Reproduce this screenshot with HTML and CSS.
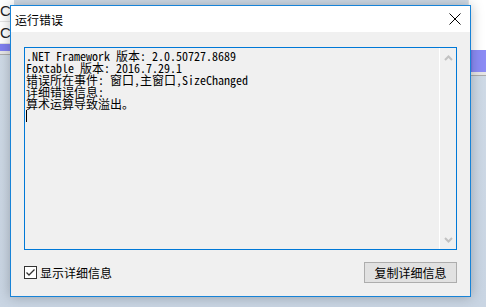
FILE: index.html
```html
<!DOCTYPE html>
<html lang="zh-CN">
<head>
    <meta charset="UTF-8">
    <title>运行错误</title>
    <link rel="stylesheet" href="styles.css">
</head>
<body>

    <!-- Application behind the dialog -->
    <div class="desktop">
        <div class="app-left">
            <div class="app-row">C:</div>
            <div class="app-row">C:</div>
            <div class="app-band"></div>
        </div>
        <div class="app-right">
            <div class="app-cell"></div>
            <div class="app-band"></div>
        </div>
    </div>

    <!-- Error dialog -->
    <div class="dialog">
        <div class="titlebar">
            <span class="title">运行错误</span>
            <svg class="close" width="12" height="12" viewBox="0 0 12 12">
                <path d="M0.5 0.5 L11.5 11.5 M11.5 0.5 L0.5 11.5" stroke="#000" stroke-width="1" fill="none"/>
            </svg>
        </div>
        <div class="body">
            <div class="details">
                <div class="details-text">
                    <div class="line">.NET Framework 版本: 2.0.50727.8689</div>
                    <div class="line">Foxtable 版本: 2016.7.29.1</div>
                    <div class="line">错误所在事件: 窗口,主窗口,SizeChanged</div>
                    <div class="line">详细错误信息:</div>
                    <div class="line">算术运算导致溢出。</div>
                    <div class="line"><span class="caret"></span></div>
                </div>
                <div class="scrollbar">
                    <svg width="9" height="6" viewBox="0 0 9 6">
                        <path d="M1 5 L4.5 1.5 L8 5" stroke="#c2c2c2" stroke-width="2" fill="none"/>
                    </svg>
                    <svg width="9" height="6" viewBox="0 0 9 6">
                        <path d="M1 1 L4.5 4.5 L8 1" stroke="#c2c2c2" stroke-width="2" fill="none"/>
                    </svg>
                </div>
            </div>
            <div class="footer">
                <label class="check">
                    <span class="box">
                        <svg width="11" height="11" viewBox="0 0 11 11">
                            <path d="M1.5 5.5 L4 8 L9.5 2.5" stroke="#333" stroke-width="1.3" fill="none"/>
                        </svg>
                    </span>
                    显示详细信息
                </label>
                <button class="copy">复制详细信息</button>
            </div>
        </div>
    </div>

</body>
</html>
```

FILE: styles.css
```css
/* Global Styles */
body {
    margin: 0;
    padding: 0;
    width: 486px;
    height: 307px;
    overflow: hidden;
    position: relative;
    font-family: "Noto Sans CJK SC", "Liberation Sans", sans-serif;
    font-size: 12px;
    background: linear-gradient(180deg, #d0dbe7 0%, #c9d5e3 100%);
}

/* Background window */
.desktop {
    display: flex;
    justify-content: space-between;
    height: 100%;
}
.app-left {
    width: 14px;
}
.app-row {
    height: 21px;
    background-color: #fff;
    border-bottom: 1px solid #e4e4e4;
    font-family: "Liberation Sans", sans-serif;
    font-size: 15px;
    line-height: 21px;
    color: #222;
    overflow: hidden;
}
.app-band {
    height: 7px;
    background-color: #8080f0;
    border-bottom: 3px solid #e6e6e6;
    box-shadow: 0 1px 0 #aaa;
}
.app-right {
    width: 24px;
}
.app-right .app-cell {
    height: 50px;
    background-color: #fff;
    border-left: 1px solid #e4e4e4;
    margin-left: 6px;
}
.app-right .app-band {
    height: 22px;
    background: linear-gradient(90deg, #7b7bea 0%, #7b7bea 40%, #8c8cf5 45%);
}

/* Dialog window */
.dialog {
    position: absolute;
    left: 10px;
    top: 5px;
    width: 459px;
    height: 290px;
    border: 1px solid #1883d7;
    background-color: #f0f0f0;
    display: flex;
    flex-direction: column;
    box-shadow: 0 0 12px rgba(0, 0, 0, 0.25);
}
.titlebar {
    height: 26px;
    background-color: #fff;
    display: flex;
    align-items: center;
    justify-content: space-between;
    padding: 0 9px 0 4px;
}
.title {
    color: #000;
    font-size: 12px;
}
.body {
    flex: 1;
    padding: 15px 13px 0 13px;
    display: flex;
    flex-direction: column;
}
.details {
    height: 201px;
    border: 1px solid #0078d7;
    display: flex;
}
.details-text {
    flex: 1;
    padding: 2px 1px;
    font-family: "Noto Sans Mono CJK SC", "Noto Sans CJK SC", "Liberation Mono", monospace;
    font-size: 12px;
    line-height: 12px;
    color: #000;
}
.line {
    white-space: pre;
    height: 12px;
}
.caret {
    display: inline-block;
    width: 1px;
    height: 12px;
    background-color: #000;
    vertical-align: top;
}
.scrollbar {
    width: 16px;
    border-left: 1px solid #fff;
    display: flex;
    flex-direction: column;
    justify-content: space-between;
    align-items: center;
    padding: 7px 0 6px;
}

/* Footer */
.footer {
    display: flex;
    justify-content: space-between;
    align-items: center;
    margin-top: 11px;
    height: 22px;
}
.check {
    display: flex;
    align-items: center;
    gap: 3px;
    color: #000;
}
.box {
    width: 11px;
    height: 11px;
    border: 1px solid #333;
    background-color: #fff;
    display: flex;
}
.copy {
    width: 93px;
    height: 21px;
    padding: 0;
    border: 1px solid #adadad;
    background-color: #e1e1e1;
    font-family: "Noto Sans CJK SC", "Liberation Sans", sans-serif;
    font-size: 12px;
    color: #000;
}
```
